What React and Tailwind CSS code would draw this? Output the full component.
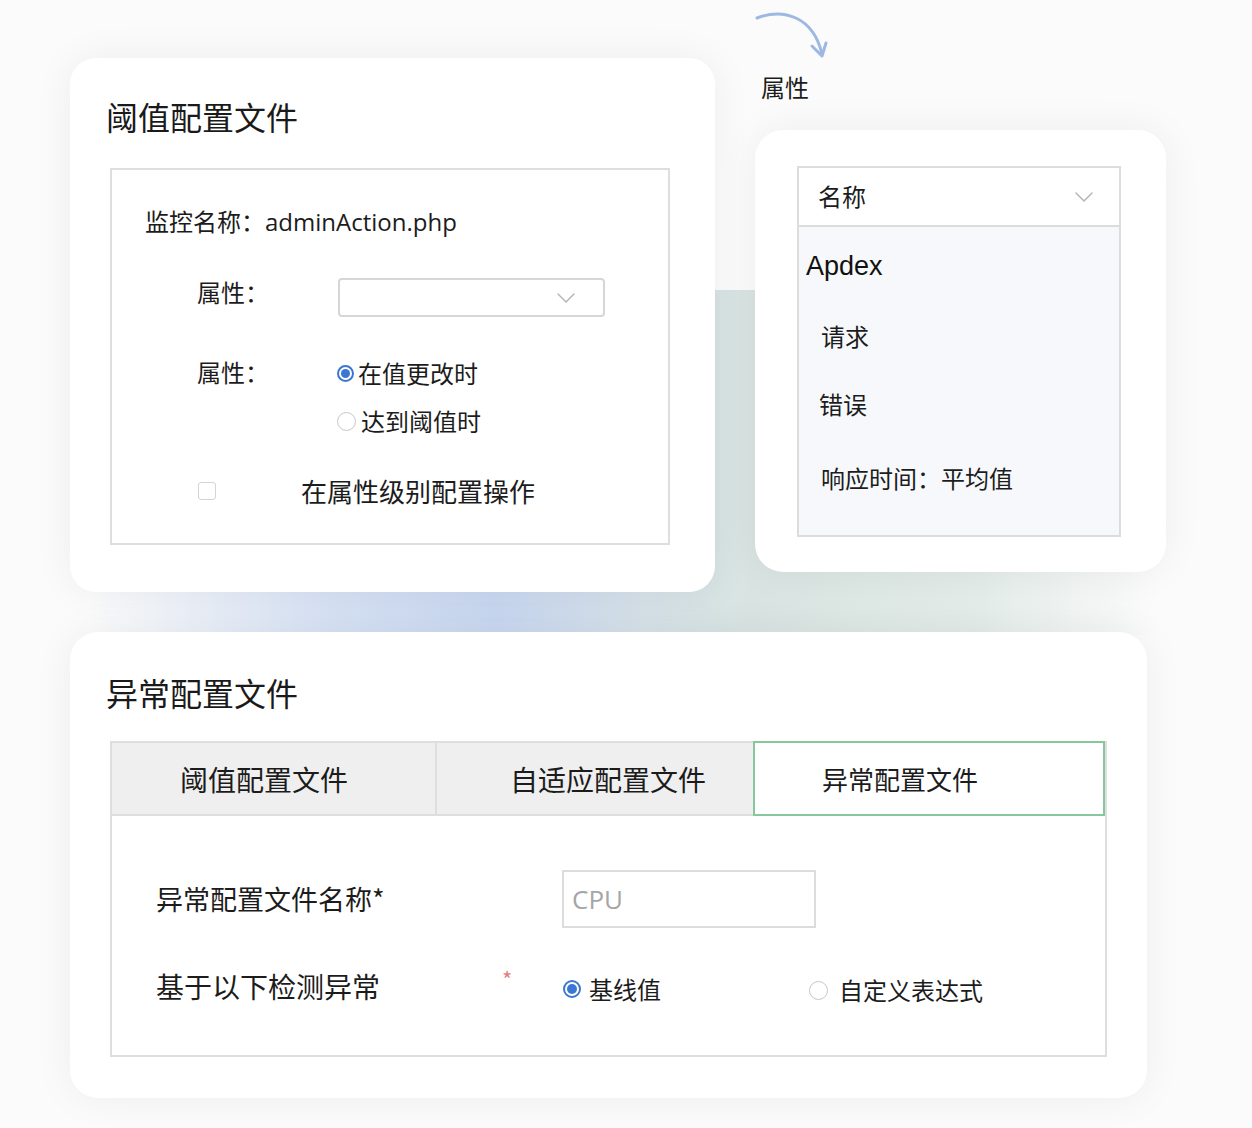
import React from 'react';

const cjk = "font-['Noto_Sans_CJK_SC','Noto_Sans',sans-serif]";

const Chevron = ({ className = '' }) => (
  <svg width="18" height="10" viewBox="0 0 18 10" className={className} fill="none">
    <path d="M1 1l8 8 8-8" stroke="#b5b5b5" strokeWidth="1.5" strokeLinecap="round" strokeLinejoin="round" />
  </svg>
);

const Radio = ({ checked, size = 18 }) =>
  checked ? (
    <span
      className="inline-flex items-center justify-center rounded-full border-2 border-[#3b76d1] bg-white shrink-0"
      style={{ width: size, height: size }}
    >
      <span className="rounded-full bg-[#3b76d1]" style={{ width: size - 8, height: size - 8 }} />
    </span>
  ) : (
    <span
      className="inline-block rounded-full border border-[#c8c8c8] bg-white shrink-0"
      style={{ width: size, height: size }}
    />
  );

const ThresholdCard = () => (
  <div className="w-[645px] h-[534px] bg-white rounded-[26px] shadow-[0_0_40px_rgba(0,0,0,0.06)] pt-[38px] pl-[36px]">
    <h2 className="text-[32px] leading-[40px] text-[#1a1a1a]">阈值配置文件</h2>
    <div className="mt-[32px] ml-[4px] w-[560px] h-[377px] border-2 border-[#dedede] pl-[33px] pt-[35px]">
      <div className="text-[24px] leading-[32px] text-[#1c1c1c]">
        监控名称：<span className="font-['Open_Sans','Noto_Sans_CJK_SC',sans-serif] text-[24px]">adminAction.php</span>
      </div>

      <div className="mt-[38px] ml-[52px] flex items-start">
        <span className="w-[141px] text-[24px] leading-[32px] text-[#1c1c1c]">属性：</span>
        <div className="mt-[2px] w-[267px] h-[39px] border-2 border-[#d6d6d6] rounded-[4px] flex items-center justify-end pr-[28px]">
          <Chevron />
        </div>
      </div>

      <div className="mt-[39px] ml-[52px] flex items-start">
        <span className="w-[140px] text-[24px] leading-[32px] text-[#1c1c1c]">属性：</span>
        <div className="flex flex-col gap-[16px] pt-[1px]">
          <label className="flex items-center gap-[4px] text-[24px] leading-[32px] text-[#1c1c1c]">
            <Radio checked size={17} />
            在值更改时
          </label>
          <label className="flex items-center gap-[5px] text-[24px] leading-[32px] text-[#1c1c1c]">
            <Radio size={19} />
            达到阈值时
          </label>
        </div>
      </div>

      <div className="mt-[38px] ml-[53px] flex items-center h-[32px]">
        <span className="w-[18px] h-[18px] border border-[#d4d4d4] rounded-[3px] bg-white" />
        <span className="ml-[85px] text-[26px] leading-[32px] text-[#1c1c1c]">在属性级别配置操作</span>
      </div>
    </div>
  </div>
);

const AttributeColumn = () => (
  <div className="w-[411px] pt-[10px]">
    <svg width="80" height="52" viewBox="0 0 80 52" fill="none" className="block">
      <path d="M2 8 C 28 -2, 58 6, 67 44" stroke="#9db8e3" strokeWidth="3" strokeLinecap="round" />
      <path d="M57 36 L67 46 L71 33" stroke="#9db8e3" strokeWidth="3" strokeLinecap="round" strokeLinejoin="round" />
    </svg>
    <div className="ml-[6px] mt-[9px] text-[24px] leading-[32px] text-[#1c1c1c]">属性</div>
    <div className="mt-[27px] w-[411px] h-[442px] bg-white rounded-[28px] shadow-[0_0_40px_rgba(0,0,0,0.06)] pt-[36px] pl-[42px]">
      <div className="w-[324px] h-[59px] border-2 border-[#dcdcdc] border-b-0 flex items-center justify-between pl-[19px] pr-[26px] bg-white">
        <span className="text-[24px] leading-[32px] text-[#1c1c1c] -mt-[2px]">名称</span>
        <Chevron />
      </div>
      <div className="w-[324px] h-[312px] border-2 border-[#dcdcdc] bg-[#f6f8fb] relative">
        <div className="absolute left-[7px] top-[21px] font-['Liberation_Sans',sans-serif] text-[27px] leading-[36px] text-[#111]">Apdex</div>
        <div className="absolute left-[22px] top-[93px] text-[24px] leading-[32px] text-[#1c1c1c]">请求</div>
        <div className="absolute left-[20px] top-[161px] text-[24px] leading-[32px] text-[#1c1c1c]">错误</div>
        <div className="absolute left-[22px] top-[235px] text-[24px] leading-[32px] text-[#1c1c1c]">响应时间：平均值</div>
      </div>
    </div>
  </div>
);

const AnomalyCard = () => (
  <div className="w-[1077px] h-[466px] bg-white rounded-[28px] shadow-[0_0_40px_rgba(0,0,0,0.06)] pt-[40px] pl-[36px]">
    <h2 className="text-[32px] leading-[40px] text-[#1a1a1a]">异常配置文件</h2>
    <div className="mt-[29px] ml-[4px] w-[997px] h-[316px] border-2 border-[#dedede]">
      <div className="flex h-[73px]">
        <div className="w-[323px] bg-[#efefef] border-b-2 border-[#dedede] flex items-center pl-[68px] text-[28px] leading-[36px] text-[#1c1c1c]">
          阈值配置文件
        </div>
        <div className="w-[318px] bg-[#efefef] border-l-2 border-b-2 border-[#dedede] flex items-center pl-[73px] text-[28px] leading-[36px] text-[#1c1c1c]">
          自适应配置文件
        </div>
        <div className="flex-1 -mt-[2px] h-[75px] border-2 border-[#86c79d] bg-white flex items-center pl-[67px] text-[26px] leading-[36px] text-[#1c1c1c]">
          异常配置文件
        </div>
      </div>

      <div className="pl-[44px] pt-[54px]">
        <div className="flex items-center h-[58px]">
          <span className="w-[406px] text-[27px] leading-[36px] text-[#1c1c1c]">异常配置文件名称*</span>
          <div className="w-[254px] h-[58px] border-2 border-[#dcdcdc] flex items-center pl-[8px] font-['Open_Sans',sans-serif] text-[26px] text-[#a6a6a6]">
            CPU
          </div>
        </div>
        <div className="mt-[40px] flex items-center h-[36px]">
          <span className="w-[346px] text-[28px] leading-[36px] text-[#1c1c1c]">基于以下检测异常</span>
          <span className="w-[61px] -mt-[16px] text-[22px] leading-[22px] text-[#e38080]">*</span>
          <label className="flex items-center gap-[8px] w-[246px] text-[24px] leading-[32px] text-[#1c1c1c] pt-[6px]">
            <Radio checked size={18} />
            基线值
          </label>
          <label className="flex items-center gap-[11px] text-[24px] leading-[32px] text-[#1c1c1c] pt-[8px]">
            <Radio size={19} />
            自定义表达式
          </label>
        </div>
      </div>
    </div>
  </div>
);

export default function App() {
  return (
    <div className={`${cjk} relative w-[1252px] h-[1128px] overflow-hidden bg-[#fbfbfb]`}>
      <div className="absolute left-[90px] top-[290px] w-[1070px] h-[345px] bg-[linear-gradient(90deg,rgba(255,255,255,0)_0%,#d7e2f4_22%,#c8d7f0_38%,#d6e1e8_52%,#d9e4e2_62%,#e2ebe7_82%,rgba(250,251,251,0)_100%)]" />
      <div className="relative pl-[70px]">
        <div className="flex items-start gap-[40px]">
          <div className="pt-[58px]">
            <ThresholdCard />
          </div>
          <AttributeColumn />
        </div>
        <div className="mt-[40px]">
          <AnomalyCard />
        </div>
      </div>
    </div>
  );
}
